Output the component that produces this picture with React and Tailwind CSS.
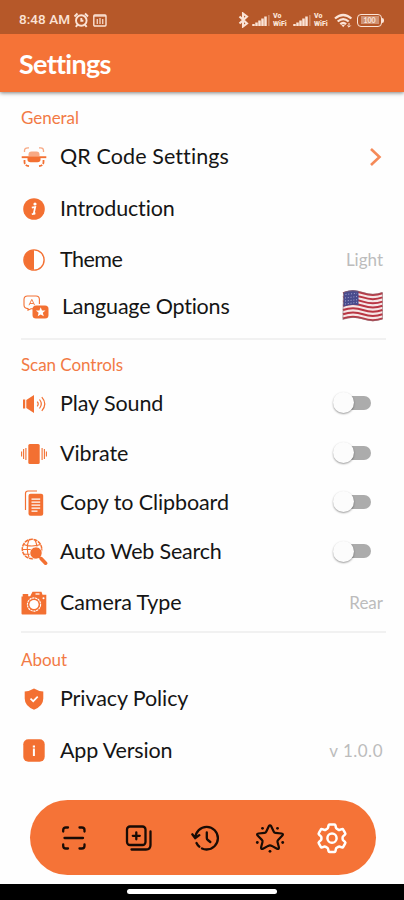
import React from "react";

const ORANGE = "#f37032";

function ScanFrameIcon() {
  return (
    <svg width="26" height="22" viewBox="0 0 26 22" fill="none" stroke={ORANGE}>
      <path d="M3.5 6V4.500Q3.500 1.800 7 1.800H8M18 1.800h1.500q3 0 3 2.700V6" strokeWidth="1.300" opacity=".6" />
      <path d="M3.500 14v2q0 3.500 4.500 4.200M22.500 14v2q0 3.500-4.500 4.200" strokeWidth="1.800" strokeDasharray="4 1.200" />
      <path d="M7.500 8.500q0-3 3-3h5q3 0 3 3v1.500h-11Z" fill={ORANGE} stroke="none" opacity=".6" />
      <path d="M.7 11.200h24.600" strokeWidth="1.900" />
      <path d="M6.500 12h13v1.500q0 2.800-3 2.800h-7q-3 0-3-2.800Z" fill={ORANGE} stroke="none" />
    </svg>
  );
}

function InfoCircleIcon() {
  return (
    <svg width="22" height="22" viewBox="0 0 22 22">
      <circle cx="11" cy="11" r="10.8" fill={ORANGE} />
      <circle cx="12" cy="6" r="1.6" fill="#fff" />
      <path d="M8.800 9.600 12.200 9 10.800 15.400 12.400 15M8.800 16.200l3.400-.6" stroke="#fff" strokeWidth="1.700" fill="none" />
    </svg>
  );
}

function ContrastIcon() {
  return (
    <svg width="22" height="22" viewBox="0 0 22 22">
      <circle cx="11" cy="11" r="10.1" fill="#fff" stroke={ORANGE} strokeWidth="1.4" />
      <path d="M11 1a10 10 0 0 0 0 20Z" fill={ORANGE} />
    </svg>
  );
}

function TranslateIcon() {
  return (
    <svg width="26" height="24" viewBox="0 0 26 24" fill="none">
      <path d="M10 13.800H8l-3 1.400v-1.600Q1 13.400 1 10V4.500Q1 1 4.500 1H13q3.400 0 3.400 3.500V9" stroke={ORANGE} strokeWidth="1.100" />
      <path d="m6 10.200 2.800-5.800 2.800 5.800M7 8.500h3.600" stroke={ORANGE} strokeWidth=".9" />
      <path d="M13.500 10.500h8.500q3.500 0 3.500 3.500v6q0 3.600-3.500 3.600h-9q-3.500 0-3.500-3.500V14.200q0-3.700 4-3.700Z" fill={ORANGE} />
      <path d="m17.700 12.300 1.300 3.100 3.500.2-2.700 2.200 1 3.400-3.100-1.800-3 1.900.9-3.500-2.700-2.200 3.500-.2Z" fill="#fff" />
    </svg>
  );
}

function SpeakerIcon() {
  return (
    <svg width="26" height="20" viewBox="0 0 26 20" fill="none">
      <path d="M2 5.500h2.200v9H2ZM5.300 6 13 1v18L5.300 14Z" fill={ORANGE} />
      <path d="M16.200 7.700q2 2.300 0 4.600M18.500 5.500q3.600 4.500 0 9M20.800 3.200q6 6.800 0 13.600" stroke={ORANGE} strokeWidth="1.200" />
    </svg>
  );
}

function VibrateIcon() {
  return (
    <svg width="26" height="22" viewBox="0 0 26 22">
      <rect x="7.300" y="1" width="11.400" height="20" rx="1.500" fill={ORANGE} />
      <path d="M4.900 5v12M2.600 6v10M.6 8.500v5M21.100 5v12M23.400 6v10M25.400 8.500v5" stroke={ORANGE} strokeWidth="1.100" />
    </svg>
  );
}

function CopyIcon() {
  return (
    <svg width="20" height="26" viewBox="0 0 20 26" fill="none">
      <path d="M1.500 20V3.500Q1.500 1 4 1h9" stroke={ORANGE} strokeWidth="1.200" />
      <rect x="4.500" y="3.700" width="14.700" height="22" rx="2" fill={ORANGE} />
      <path d="M7.500 9.200h8.700M7.500 12.200h8.700M7.500 15.200h8.700M7.500 18.200h8.700M7.500 21.200h6" stroke="#fff" strokeWidth="1.300" />
    </svg>
  );
}

function WebSearchIcon() {
  return (
    <svg width="27" height="28" viewBox="0 0 27 28" fill="none">
      <g stroke={ORANGE} strokeWidth="1.500">
        <circle cx="11" cy="11" r="9.700" strokeDasharray="4 .7" />
        <path d="M8 1.800q-3.500 8.500 0 17.500M13.800 1.800q1.700 3 2.200 7M2.500 6.500q8 3 17 0M1.500 11.500h9M3 16.200h7" strokeWidth="1.100" />
      </g>
      <path d="m18.500 19 6.800 6.500" stroke="#fff" strokeWidth="5.500" />
      <circle cx="15" cy="15" r="6.100" fill={ORANGE} stroke="#fff" strokeWidth=".7" />
      <path d="m18 18.500 2 2" stroke={ORANGE} strokeWidth="2" />
      <path d="m20.300 20.700 4.300 4.500" stroke={ORANGE} strokeWidth="3.600" strokeLinecap="round" />
    </svg>
  );
}

function CameraIcon() {
  return (
    <svg width="26" height="24" viewBox="0 0 26 24" fill="none">
      <path d="M.5 5.500h1.200V3h5.500v2.200h2L11.500.7h9l1 3h3.800v19q0 .8-1 .8H1.500q-1 0-1-1Z" fill={ORANGE} />
      <path d="M14.500 3h4" stroke="#fff" strokeWidth="1.300" />
      <circle cx="13" cy="13.500" r="6.600" stroke="#fff" strokeWidth="1.100" strokeDasharray="2.300 .6" />
      <circle cx="13" cy="13.500" r="4.600" fill="#fff" />
      <circle cx="22.500" cy="7.200" r="1" fill="#fff" />
    </svg>
  );
}

function ShieldIcon() {
  return (
    <svg width="20" height="22" viewBox="0 0 20 22" fill="none">
      <path d="M10 .5q4 2.500 9.300 3v7Q19.300 18 10 21.700.7 18 .7 10.500v-7Q6 3 10 .5Z" fill={ORANGE} />
      <path d="m6.500 10.700 2.700 2.500 4.500-4.500" stroke="#fff" strokeWidth="1.700" />
    </svg>
  );
}

function VersionIcon() {
  return (
    <svg width="22" height="23" viewBox="0 0 22 23">
      <rect x=".3" y=".3" width="21.400" height="22.400" rx="5" fill={ORANGE} />
      <rect x="9.800" y="6.500" width="2.200" height="2" fill="#fff" />
      <rect x="9.900" y="9.500" width="2" height="7.500" fill="#fff" />
    </svg>
  );
}

function Flag() {
  const stripes = [0, 1, 2, 3, 4, 5, 6].map((i) => 2 + i * 4.2);
  return (
    <svg width="42" height="32" viewBox="0 0 42 32" fill="none">
      <path d="M1.500 2.500Q11-1 21 2.500T40.500 2.500V29Q31 32.500 21 29T.8 29.500Z" fill="#f5e6e6" />
      {stripes.map((y) => (
        <path key={y} d={`M1 ${y + 1.2}q10-3.500 20 0t19.500 0`} stroke="#b93643" strokeWidth="2" />
      ))}
      <path d="M1.500 2.200Q9-.8 16.500 1.100V15.200Q9 14 1.200 16.800Z" fill="#494b8d" />
      <path d="M3.500 4.500 15 3.200M3 8l12-1.500M3 11l12-1.300M3 14l12-1.700" stroke="#a6a7cf" strokeWidth="1" strokeDasharray="1 1.800" />
      <path d="M1.500 2.500Q11-1 21 2.500T40.500 2.500V29Q31 32.500 21 29T.8 29.500Z" stroke="#8d6970" strokeWidth=".6" />
    </svg>
  );
}

function Toggle() {
  return (
    <button className="relative mb-[2px] mr-[33px] flex h-[21px] w-[38px] items-center" role="switch" aria-checked="false">
      <span className="ml-[6px] h-[14px] w-[32px] rounded-full bg-[#acacac]" />
      <span className="absolute left-0 top-0 h-[21px] w-[21px] rounded-full bg-[#fcfcfc] shadow-[0_1px_2px_rgba(0,0,0,0.4)]" />
    </button>
  );
}

function Row({ icon, label, height, tracking, indent = "ml-[60px]", children }) {
  return (
    <div className={`flex items-center ${height}`}>
      <span className="-mr-[68px] flex w-[68px] shrink-0 justify-center">{icon}</span>
      <span className={`grow whitespace-nowrap text-[21.5px] leading-none text-[#151515] ${indent} ${tracking}`}>{label}</span>
      {children}
    </div>
  );
}

function Heading({ children }) {
  return <h2 className="flex h-[26px] items-center pb-[2px] pl-[21px] text-[17px] leading-none tracking-[-0.05px] text-[#f27a45]">{children}</h2>;
}

function Value({ children, tracking = "tracking-[0px]" }) {
  return <span className={`mr-[21px] text-[17px] leading-none text-[#bcbcbc] ${tracking}`}>{children}</span>;
}

function Signal() {
  return (
    <svg width="18" height="12" viewBox="0 0 18 12" stroke="#fbe3d6" strokeWidth="2.500">
      <path d="M1.500 12v-2M4.500 12V8.500M7.500 12V6.500M10.500 12V4.500M13.500 12V2.500" />
      <path d="M16.900 12V1" strokeWidth="1" opacity=".55" />
    </svg>
  );
}

function VoWifi() {
  return (
    <span className="flex w-[17px] flex-col font-['Roboto',sans-serif] text-[7px] font-black text-[#fbe3d6]">
      <span className="leading-[8px]">Vo</span>
      <span className="leading-[8px]">WiFi</span>
    </span>
  );
}

function StatusBar() {
  return (
    <div className="flex h-[34px] items-center bg-[#b65829] pl-[19px] pt-[6px] text-[#fbe3d6]">
      <span className="w-[54px] whitespace-nowrap font-['Roboto',sans-serif] text-[13.5px] font-medium leading-none tracking-[0.05px]">8:48 AM</span>
      <svg width="17" height="16" viewBox="0 0 17 16" fill="none" stroke="currentColor" strokeWidth="1.900">
        <circle cx="8.300" cy="8.500" r="5.300" />
        <path d="M8.300 6v2.800h2.100M1.500 4.500l3-3M15 4.500l-3-3M4.500 12.800l-1.700 2M12 12.800l1.700 2" />
      </svg>
      <svg width="14" height="13" viewBox="0 0 14 13" fill="none" stroke="currentColor" strokeWidth="1.400" className="ml-[3px]">
        <rect x=".8" y="1" width="12.200" height="11" rx="1" />
        <path d="M1 2h12M7 4v6M4.300 5v5M9.700 5v5" opacity=".85" />
      </svg>
      <div className="ml-auto mr-[20px] flex items-center gap-[3px]">
        <svg width="11" height="16" viewBox="0 0 11 16" fill="none" stroke="currentColor" strokeWidth="2.100">
          <path d="m1.500 4.500 7.500 7-4 3V1.500l4 3-7.500 7" />
        </svg>
        <Signal />
        <VoWifi />
        <Signal />
        <VoWifi />
        <svg width="19" height="15" viewBox="0 0 19 15" fill="none" stroke="currentColor" strokeWidth="2.300">
          <path d="M1 5.500q8.200-7 16.400 0M3.700 8.500q5.500-4.800 11 0M6.300 11.200q2.900-2.500 5.800 0" />
          <path d="M9.200 14.300 7.500 12h3.400Z" fill="currentColor" stroke="none" />
          <path d="M15 10v4M13.300 12.500l1.700 1.700 1.700-1.700" strokeWidth="1" />
        </svg>
        <span className="ml-[1px] flex items-center">
          <span className="flex h-[13px] w-[25px] items-center justify-center rounded-[4px] border-[1.500px] border-[#fbe3d6]">
            <span className="flex h-[8px] w-[18px] items-center justify-center bg-[#cf9274] text-[7px] font-bold leading-none">100</span>
          </span>
          <span className="h-[5px] w-[2px] rounded-r bg-[#fbe3d6]" />
        </span>
      </div>
    </div>
  );
}

function BottomNav() {
  return (
    <nav className="ml-[30px] mt-[24px] flex h-[75px] w-[346px] items-center rounded-full bg-[#f57337] text-[#180b05]">
      <svg width="26" height="26" viewBox="0 0 26 26" fill="none" stroke="currentColor" strokeWidth="2.300" strokeLinecap="round" className="ml-[31px]">
        <path d="M2.200 6.500V5q0-2.500 2.700-2.500H7M18.500 2.500h2.300q2.700 0 2.700 2.500v1.500M2.200 19.500V21q0 2.500 2.700 2.500H7M18.500 23.500h2.300q2.700 0 2.700-2.500v-1.500M3.500 13h18.500" />
      </svg>
      <svg width="28" height="28" viewBox="0 0 28 28" fill="none" stroke="currentColor" strokeWidth="2.300" strokeLinecap="round" className="ml-[38px]">
        <rect x="2" y="2.500" width="18.500" height="18.500" rx="3" />
        <path d="M11.300 8.300v7M7.800 11.800h7M25.500 7.500V21q0 4.500-4.500 4.500H6.500" />
      </svg>
      <svg width="29" height="28" viewBox="0 0 29 28" fill="none" stroke="currentColor" strokeWidth="2.300" strokeLinecap="round" strokeLinejoin="round" className="ml-[38px]">
        <path d="M4.300 14A11.300 11.300 0 1 1 15.500 25.500q-2.400 0-4.500-1M5.500 19q1 2.200 2.800 3.700M1.300 10.300l3 3.900 4-3M15.800 8.500V14q0 1.300 1 2l2.500 2" />
      </svg>
      <svg width="30" height="30" viewBox="0 0 30 30" fill="none" stroke="currentColor" strokeWidth="2.200" strokeLinecap="round" strokeLinejoin="round" className="ml-[35px]">
        <path d="M13.800 3.200q1.200-1.600 2.400 0l2.600 5.500q.5 1.100 1.700 1.200l6 .6q2.300.5.900 2l-4.300 4.400q-.9.900-.6 2.100l1.400 5.300q.2 2.200-1.900 1.400l-5.200-2.800q-1.800-.9-3.600 0L8 25.700q-2.100.8-1.900-1.400L7.500 19q.3-1.200-.6-2.100l-4.300-4.400q-1.400-1.500.9-2l6-.6q1.200-.1 1.700-1.200Z" />
        <g fill="currentColor" stroke="none">
          <circle cx="7.500" cy="5.300" r="1.400" />
          <circle cx="22.500" cy="5.300" r="1.400" />
          <circle cx="2.300" cy="19.500" r="1.400" />
          <circle cx="27.700" cy="19.500" r="1.400" />
          <circle cx="15" cy="28.300" r="1.400" />
        </g>
      </svg>
      <svg width="32" height="32" viewBox="0 0 32 32" fill="none" stroke="#fff" strokeWidth="2.500" strokeLinejoin="round" className="ml-[31px]">
        <path d="M13.500 2.500h5q.8 0 1 1l.4 2q.2.900 1 1.300l1.300.8q.8.500 1.700.2l2-.7q.9-.3 1.300.5l2 3.600q.5.800-.2 1.400l-1.700 1.500q-.7.600-.7 1.500v1.300q0 .9.700 1.500l1.700 1.500q.7.600.2 1.400l-2 3.600q-.4.800-1.300.5l-2-.7q-.9-.3-1.700.2l-1.300.8q-.8.400-1 1.300l-.4 2q-.2 1-1 1h-5q-.8 0-1-1l-.4-2q-.2-.9-1-1.300l-1.300-.8q-.8-.5-1.700-.2l-2 .7q-.9.300-1.300-.5l-2-3.600q-.5-.8.2-1.400l1.700-1.500q.7-.6.700-1.500v-1.300q0-.9-.7-1.500L3 12.600q-.7-.6-.2-1.400l2-3.600q.4-.8 1.300-.5l2 .7q.9.300 1.700-.2l1.300-.8q.8-.4 1-1.300l.4-2q.2-1 1-1Z" />
        <circle cx="16" cy="16.200" r="4.600" />
      </svg>
    </nav>
  );
}

export default function App() {
  return (
    <div className="flex h-[900px] w-[404px] flex-col overflow-hidden bg-[#fefefe] font-['Lato',sans-serif] [font-variant-ligatures:none]">
      <header className="shadow-[0_1px_4px_rgba(0,0,0,0.5)]">
        <StatusBar />
        <div className="flex h-[58px] items-center bg-[#f57337] pl-[19px]">
          <h1 className="text-[27px] font-bold leading-none tracking-[-0.7px] text-white">Settings</h1>
        </div>
      </header>

      <section className="pt-[13px]">
        <Heading>General</Heading>
        <Row icon={<ScanFrameIcon />} label="QR Code Settings" height="h-[52px]" tracking="tracking-[0.1px]">
          <svg width="13" height="20" viewBox="0 0 13 20" fill="none" stroke="#f58a58" strokeWidth="2.600" className="mr-[22px]">
            <path d="m2 2 8.500 8L2 18" />
          </svg>
        </Row>
        <Row icon={<InfoCircleIcon />} label="Introduction" height="h-[51px]" tracking="tracking-[-0.15px]" />
        <Row icon={<ContrastIcon />} label="Theme" height="h-[51px]" tracking="tracking-[-0.5px]">
          <Value>Light</Value>
        </Row>
        <Row icon={<span className="ml-[4px]"><TranslateIcon /></span>} label="Language Options" height="h-[43px]" tracking="tracking-[-0.2px]" indent="ml-[62px]">
          <span className="mb-[2px] mr-[20px]"><Flag /></span>
        </Row>
      </section>
      <hr className="ml-[21px] mr-[18px] mt-[10px] border-t-2 border-[#f1f1f1]" />

      <section className="pt-[12px]">
        <Heading>Scan Controls</Heading>
        <Row icon={<SpeakerIcon />} label="Play Sound" height="h-[51px]" tracking="tracking-[-0.1px]"><Toggle /></Row>
        <Row icon={<VibrateIcon />} label="Vibrate" height="h-[49px]" tracking="tracking-[-0.1px]"><Toggle /></Row>
        <Row icon={<CopyIcon />} label="Copy to Clipboard" height="h-[49px]" tracking="tracking-[-0.1px]"><Toggle /></Row>
        <Row icon={<WebSearchIcon />} label="Auto Web Search" height="h-[50px]" tracking="tracking-[-0.2px]"><Toggle /></Row>
        <Row icon={<CameraIcon />} label="Camera Type" height="h-[51px]" tracking="tracking-[-0.1px]">
          <Value>Rear</Value>
        </Row>
      </section>
      <hr className="ml-[21px] mr-[18px] mt-[3px] border-t-2 border-[#f1f1f1]" />

      <section className="pt-[14px]">
        <Heading>About</Heading>
        <Row icon={<ShieldIcon />} label="Privacy Policy" height="h-[52px]" tracking="tracking-[-0.1px]" />
        <Row icon={<VersionIcon />} label="App Version" height="h-[51px]" tracking="tracking-[-0.15px]">
          <Value tracking="tracking-[0.5px]">v 1.0.0</Value>
        </Row>
      </section>

      <BottomNav />
      <footer className="mt-auto flex h-[16px] justify-center bg-black pt-[5px]">
        <span className="h-[5px] w-[150px] rounded-full bg-white" />
      </footer>
    </div>
  );
}
